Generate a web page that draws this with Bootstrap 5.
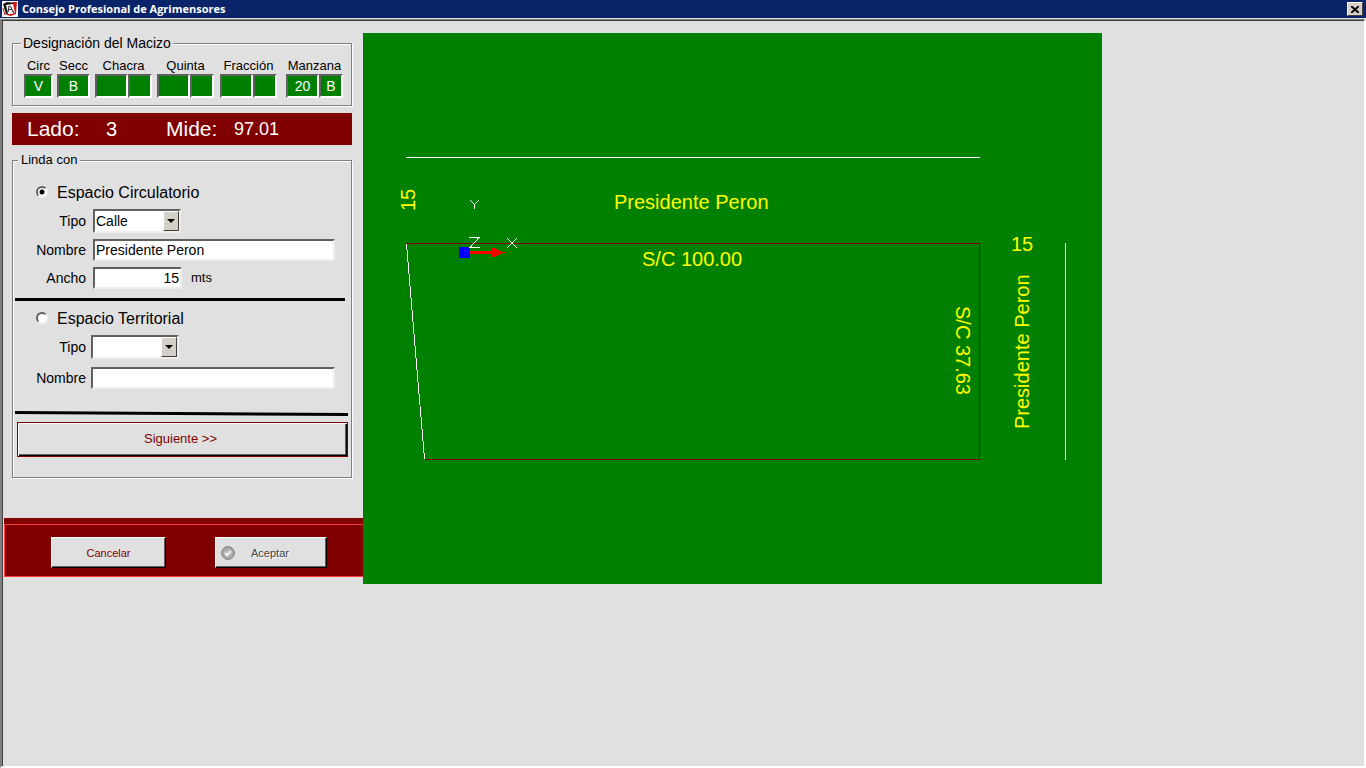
<!DOCTYPE html>
<html lang="es">
<head>
<meta charset="utf-8">
<meta name="viewport" content="width=device-width, initial-scale=1">
<title>Consejo Profesional de Agrimensores</title>
<link href="https://cdn.jsdelivr.net/npm/bootstrap@5.3.0/dist/css/bootstrap.min.css" rel="stylesheet">
<style>
  :root { --face: #e0e0e0; --maroon: #800000; --green: #008000; }
  body { background: var(--face); color: #000; font: 14px/16px "Liberation Sans", Arial, sans-serif; }
  .title-bar { height: 18px; background: #0a246a; color: #fff; padding: 0 3px 0 2px; font: 700 11px/18px "Open Sans", "Noto Sans", sans-serif; }
  .title-bar h1 { font: inherit; }
  .close-btn { width: 16px; height: 14px; padding: 0; background: #d4d0c8; border: 1px solid; border-color: #fff #404040 #404040 #fff; }
  .close-btn svg { display: block; margin: auto; }
  .client { border: 2px solid; border-color: #808080 #fff #fff #808080; border-top-width: 1px; box-shadow: inset 1px 1px 0 #404040; padding-top: 13px; margin-top: 1px; }
  .workspace { display: grid; grid-template-columns: 361px 739fr 262fr; }
  .panel { padding: 0 11px 0 10px; }
  .frame { border: 1px solid #808080; box-shadow: 1px 1px 0 #fff, inset 1px 1px 0 #fff; }
  .frame > legend { float: none; width: auto; margin: 0 0 0 5px; padding: 0 3px; background: var(--face); font-size: 13px; line-height: 20px; }
  .frame > legend.wide { font-size: 14px; margin-left: 8px; padding: 0 2px; }
  .parcel { display: grid; grid-template-columns: 33px 38px 62px 63px 66px 58px; padding: 5px 6px 7px 11px; font-size: 13px; }
  .parcel > div { width: max-content; text-align: center; }
  .cell { width: 24px; height: 24px; padding: 0; text-align: center; color: #fff; background: var(--green); font-size: 14px; border: 2px solid; border-color: #606060 #fff #fff #606060; border-radius: 0; }
  .cell.w-s { width: 29px; } .cell.w-m { width: 33px; }
  .measure { height: 32px; margin: 7px 0 5px; padding-left: 15px; background: var(--maroon); color: #fff; font-size: 21px; line-height: 32px; }
  .measure .side { width: 79px; } .measure .side + dd { width: 60px; font-size: 20px; }
  .measure .len { width: 68px; } .measure .len + dd { font-size: 18px; }
  .choice { height: 24px; padding-left: 23px; font-size: 16px; line-height: 24px; }
  .circ .choice { margin-top: 11px; }
  .choice input { appearance: none; width: 12px; height: 12px; margin: 0 9px 2px 0; border: 2px solid; border-color: #606060 #f4f4f4 #f4f4f4 #606060; border-radius: 50%; background: #fff; flex: none; }
  .choice input:checked { background: radial-gradient(circle, #000 2px, #fff 3px); }
  .field { gap: 7px; margin-top: 6px; }
  .choice + .field { margin-top: 4px; }
  .field > label:first-child { width: 73px; text-align: right; }
  .terr .field { gap: 5px; }
  .terr .name-row { margin-top: 8px; }
  .field .unit { padding-left: 2px; font-size: 13px; }
  .sunken { height: 22px; padding: 0 1px; background: #fff; color: #000; border: 2px solid; border-color: #606060 #f0eeea #f0eeea #606060; border-radius: 0; font-size: 14px; line-height: 18px; }
  select.sunken { width: 88px; height: 24px; appearance: none; }
  .drop { right: 2px; top: 2px; width: 16px; height: 20px; background: #d4d0c8; border: 1px solid; border-color: #fff #404040 #404040 #fff; pointer-events: none; }
  .drop svg { display: block; margin: 7px auto 0; }
  .name-row { margin-right: 16px; }
  .num { width: 89px; text-align: right; }
  .rule { height: 3px; margin: 9px 6px 6px 2px; background: #000; opacity: 1; border: 0; }
  .rule-slope { height: 5px; margin: 22px 3px 6px 2px; }
  .rule-slope svg { width: 100%; height: 5px; }
  .next { height: 35px; margin: 0 3px 20px 4px; padding: 0 4px 2px 0; color: var(--maroon); background: var(--face); border: 1px solid var(--maroon); box-shadow: inset 1px 1px 0 #fff, inset -1px -1px 0 #000, inset -2px -2px 0 #606060; font-size: 13px; }
  .actions { height: 59px; margin: 40px 0 0 2px; padding: 6px 0 0; background: var(--maroon); }
  .actions > div { height: 53px; border: 1px solid #ff3c3c; border-right: 0; padding: 12px 36px 0 46px; }
  .act { width: 115px; height: 31px; padding: 0; background: var(--face); color: var(--maroon); border: 1px solid; border-color: #fff #000 #000 #fff; box-shadow: inset -1px -1px 0 #606060; font-size: 11px; }
  .act.ok { width: 112px; color: #404040; text-shadow: 1px 1px 0 #fff; }
  .act.ok svg { margin: 0 16px 0 5px; }
  .plan { display: block; width: 100%; height: auto; background: var(--green); }
  .plan text { font: 20px "Liberation Sans", Arial, sans-serif; fill: #ff0; }
</style>
</head>
<body class="d-flex flex-column min-vh-100">
<header class="title-bar d-flex align-items-center">
  <svg width="16" height="16" viewBox="0 0 16 16" class="me-1" aria-hidden="true"><path fill="#fff" d="M0 0h16v16H0z"/><path d="M1 3l4-2 9 1-1 2-8 1 2 9-3-1z" fill="#111"/><path d="M10 1l5 0-1 12-5 2-5-1 8-2z" fill="#d01818"/><path d="M4 4l7-1 2 9-7 1z" fill="#fff"/><path d="M6 11l1-6 2 1 2 5M7 9l3-1M11 10l1 2" fill="none" stroke="#222"/><path d="M1 7l2 7M2 12l2 2" fill="none" stroke="#d01818"/></svg>
  <h1 class="m-0 flex-grow-1">Consejo Profesional de Agrimensores</h1>
  <button type="button" class="close-btn" aria-label="Cerrar"><svg width="8" height="7" viewBox="0 0 8 7"><path d="M0 0l8 7M8 0L0 7" stroke="#000" stroke-width="2"/></svg></button>
</header>
<main class="client flex-grow-1">
  <div class="workspace">
    <form>
      <div class="panel">
        <fieldset class="frame">
          <legend class="wide">Designación del Macizo</legend>
          <div class="parcel">
            <div><label for="circ" class="d-block">Circ</label><input id="circ" class="cell w-s" value="V" readonly></div>
            <div><label for="secc" class="d-block">Secc</label><input id="secc" class="cell w-m" value="B" readonly></div>
            <div><label for="chacra" class="d-block">Chacra</label><div class="d-flex"><input id="chacra" class="cell w-m" readonly><input class="cell" aria-label="Chacra, letra" readonly></div></div>
            <div><label for="quinta" class="d-block">Quinta</label><div class="d-flex"><input id="quinta" class="cell w-m" readonly><input class="cell" aria-label="Quinta, letra" readonly></div></div>
            <div><label for="fraccion" class="d-block">Fracción</label><div class="d-flex"><input id="fraccion" class="cell w-m" readonly><input class="cell" aria-label="Fracción, letra" readonly></div></div>
            <div><label for="manzana" class="d-block">Manzana</label><div class="d-flex"><input id="manzana" class="cell w-m" value="20" readonly><input class="cell" value="B" aria-label="Manzana, letra" readonly></div></div>
          </div>
        </fieldset>
        <dl class="measure d-flex">
          <dt class="side fw-normal">Lado:</dt><dd class="m-0">3</dd>
          <dt class="len fw-normal">Mide:</dt><dd class="m-0">97.01</dd>
        </dl>
        <fieldset class="frame">
          <legend>Linda con</legend>
          <section class="circ">
            <div class="choice d-flex align-items-center"><input type="radio" name="linda" id="r1" checked><label for="r1">Espacio Circulatorio</label></div>
            <div class="field d-flex align-items-center"><label for="tipo1">Tipo</label><div class="position-relative"><select id="tipo1" class="sunken d-block"><option>Calle</option></select><span class="drop position-absolute"><svg width="8" height="4"><path d="M0 0h8L4 4z"/></svg></span></div></div>
            <div class="field name-row d-flex align-items-center"><label for="nom1">Nombre</label><input id="nom1" class="sunken flex-grow-1" value="Presidente Peron"></div>
            <div class="field d-flex align-items-center"><label for="ancho">Ancho</label><input id="ancho" class="sunken num" value="15"><label for="ancho" class="unit">mts</label></div>
          </section>
          <hr class="rule">
          <section class="terr">
            <div class="choice d-flex align-items-center"><input type="radio" name="linda" id="r2"><label for="r2">Espacio Territorial</label></div>
            <div class="field d-flex align-items-center"><label for="tipo2">Tipo</label><div class="position-relative"><select id="tipo2" class="sunken d-block"><option></option></select><span class="drop position-absolute"><svg width="8" height="4"><path d="M0 0h8L4 4z"/></svg></span></div></div>
            <div class="field name-row d-flex align-items-center"><label for="nom2">Nombre</label><input id="nom2" class="sunken flex-grow-1"></div>
          </section>
          <div class="rule-slope d-flex"><svg viewBox="0 0 333 5" preserveAspectRatio="none" aria-hidden="true"><path d="M0 1.500L333 3.500" stroke="#000" stroke-width="3"/></svg></div>
          <div class="d-grid"><button type="button" class="next">Siguiente &gt;&gt;</button></div>
        </fieldset>
      </div>
      <div class="actions"><div class="d-flex justify-content-between">
        <button type="button" class="act">Cancelar</button>
        <button type="button" class="act ok d-flex align-items-center" disabled><svg width="14" height="14" viewBox="0 0 14 14"><circle cx="7" cy="7" r="6.5" fill="#a0a0a0" stroke="#8c8c8c"/><circle cx="7" cy="7" r="4.5" fill="#b4b4b4"/><path d="M4 7l2 2 4-4" fill="none" stroke="#f4f4f4" stroke-width="2"/></svg>Aceptar</button>
      </div></div>
    </form>
    <svg class="plan" viewBox="0 0 739 551" role="img" aria-label="Plano del macizo">
      <g shape-rendering="crispEdges" fill="none">
        <path d="M43 124.500H617M702.500 210V427" stroke="#fff"/>
        <path d="M43 210.500H616.500V426.500H62" stroke="#800000"/>
        <path d="M43.500 211L61.500 426" stroke="#fff"/>
        <path d="M106 219.500H128" stroke="#f00" stroke-width="3"/>
        <path d="M128 214l14 5.500-14 5.500z" fill="#f00"/>
        <path d="M96 214h11v11H96z" fill="#00f"/>
        <path d="M107 167l4.500 4.500 4.500-4.500M111.500 171v5M106 204.500h10l-9 10h10M144 205l10 10M154 205l-10 10" stroke="#fff"/>
      </g>
      <text x="251" y="176">Presidente Peron</text>
      <text x="279" y="233">S/C 100.00</text>
      <text x="648" y="218">15</text>
      <text transform="translate(52 178) rotate(-90)">15</text>
      <text transform="translate(666 396) rotate(-90)">Presidente Peron</text>
      <text transform="translate(593 273) rotate(90)">S/C 37.63</text>
    </svg>
  </div>
</main>
<script src="https://cdn.jsdelivr.net/npm/bootstrap@5.3.0/dist/js/bootstrap.bundle.min.js"></script>
</body>
</html>
